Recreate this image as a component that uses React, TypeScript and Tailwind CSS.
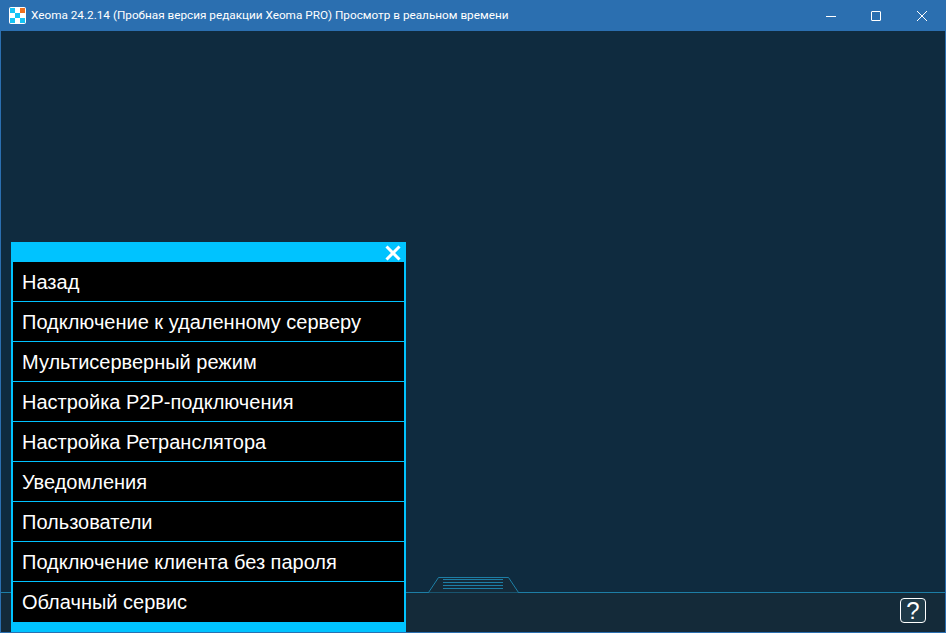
const items = [
  'Назад',
  'Подключение к удаленному серверу',
  'Мультисерверный режим',
  'Настройка P2P-подключения',
  'Настройка Ретранслятора',
  'Уведомления',
  'Пользователи',
  'Подключение клиента без пароля',
  'Облачный сервис',
];

function AppIcon() {
  return (
    <svg width="17" height="17" viewBox="0 0 17 17" className="shrink-0">
      <rect x="0" y="0" width="17" height="17" rx="2" fill="#ffffff" />
      <rect x="1" y="1" width="5" height="5" fill="#16c4f5" />
      <rect x="6" y="6" width="5" height="5" fill="#16c4f5" />
      <rect x="1" y="11" width="5" height="5" fill="#16c4f5" />
      <rect x="11" y="11" width="5" height="5" fill="#16c4f5" />
      <rect x="11" y="1" width="5" height="5" fill="#f0701e" />
    </svg>
  );
}

function TitleBar() {
  return (
    <div className="flex h-[31px] shrink-0 items-center bg-[#2b6fb0] pl-[9px] pr-px">
      <AppIcon />
      <span className="ml-[5px] flex-1 truncate text-[11.75px] text-white [font-family:'Roboto',sans-serif]">
        Xeoma 24.2.14 (Пробная версия редакции Xeoma PRO) Просмотр в реальном времени
      </span>
      <div className="flex h-full items-center">
        <div className="flex h-full w-[44px] items-center justify-center">
          <svg width="10" height="10" viewBox="0 0 10 10">
            <path d="M0 5.5h10" stroke="#fff" strokeWidth="1" />
          </svg>
        </div>
        <div className="flex h-full w-[46px] items-center justify-center">
          <svg width="10" height="10" viewBox="0 0 10 10">
            <rect x="0.5" y="0.5" width="9" height="9" rx="0.5" fill="none" stroke="#fff" strokeWidth="1" />
          </svg>
        </div>
        <div className="flex h-full w-[46px] items-center justify-center">
          <svg width="10" height="10" viewBox="0 0 10 10">
            <path d="M0 0l10 10M10 0L0 10" stroke="#fff" strokeWidth="1" />
          </svg>
        </div>
      </div>
    </div>
  );
}

function Menu() {
  return (
    <div className="absolute bottom-0 left-[10px] z-10 flex w-[395px] flex-col bg-[#00c3ff] px-[2px] pb-[10px] [font-family:'Liberation_Sans',sans-serif]">
      <div className="flex h-[20px] items-start justify-end pr-[2px] pt-[2px]">
        <svg width="18" height="18" viewBox="0 0 18 18">
          <path d="M2.5 2.5l13 13M15.5 2.5l-13 13" stroke="#fff" strokeWidth="3" />
        </svg>
      </div>
      {items.map((label, i) => (
        <div
          key={label}
          className={`flex h-[40px] items-center bg-black pl-[9px] text-[20px] text-white ${i < items.length - 1 ? 'border-b border-[#00c3ff]' : ''}`}
        >
          {label}
        </div>
      ))}
    </div>
  );
}

function BottomBar() {
  return (
    <div className="relative flex h-[40px] shrink-0 items-start justify-end border-t border-[#1d7ea6] bg-[#142a39] pr-[19px] pt-[5px]">
      <svg width="92" height="16" viewBox="0 0 92 16" className="absolute left-[427px] top-[-16px]">
        <path d="M0.5 15.5L10.5 0.5h70L90.5 15.5z" fill="#142a39" />
        <path d="M0 15.5h0.5L10.5 0.5h70L90.5 15.5H92" fill="none" stroke="#1d7ea6" strokeWidth="1" />
        <path d="M15 2.5h60M15 5.5h60M15 8.5h60M15 11.5h60" stroke="#1d7ea6" strokeWidth="1" />
      </svg>
      <div className="flex h-[25px] w-[26px] items-center justify-center rounded-[4px] border border-white bg-[#1f3a48] text-[24px] leading-none text-white [font-family:'Liberation_Sans',sans-serif]">
        ?
      </div>
    </div>
  );
}

export default function App() {
  return (
    <div className="flex h-[633px] w-[946px] flex-col overflow-hidden bg-[#2b6fb0]">
      <TitleBar />
      <div className="relative mx-px mb-px flex min-h-0 flex-1 flex-col">
        <div className="flex-1 bg-[#0f2b3f]" />
        <BottomBar />
        <Menu />
      </div>
    </div>
  );
}
